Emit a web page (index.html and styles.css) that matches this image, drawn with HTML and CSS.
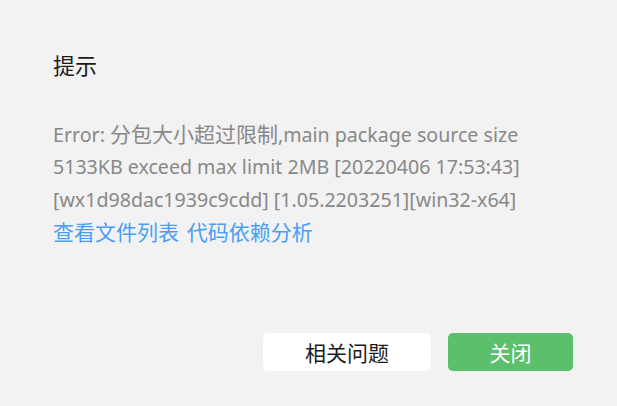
FILE: index.html
```html
<!DOCTYPE html>
<html>
<head>
<meta charset="utf-8">
<link rel="stylesheet" href="styles.css">
</head>
<body>
<div class="dialog">
  <div class="title">提示</div>
  <div class="message">
    <div class="line">Error: <span class="cjk">分包大小超过限制</span>,main package source size</div>
    <div class="line">5133KB exceed max limit 2MB [20220406 17:53:43]</div>
    <div class="line">[wx1d98dac1939c9cdd] [1.05.2203251][win32-x64]</div>
    <div class="line links"><span class="link">查看文件列表</span> <span class="link link-next">代码依赖分析</span></div>
  </div>
  <div class="actions">
    <button class="btn btn-default">相关问题</button>
    <button class="btn btn-primary">关闭</button>
  </div>
</div>
</body>
</html>
```
FILE: styles.css
```css
html, body {
  margin: 0;
  padding: 0;
  background: #f2f2f2;
}
body {
  width: 617px;
  height: 406px;
  overflow: hidden;
  font-family: "Noto Sans", "Noto Sans CJK SC", sans-serif;
}
.dialog {
  padding: 49px 44px 0 53px;
  display: flex;
  flex-direction: column;
}
.title {
  font-family: "Noto Sans CJK SC", sans-serif;
  font-size: 22px;
  line-height: 30px;
  color: #1a1a1a;
}
.message {
  margin-top: 38px;
  font-size: 19.6px;
  line-height: 33px;
  color: #888888;
}
.line {
  white-space: nowrap;
  height: 33px;
}
.cjk {
  font-family: "Noto Sans CJK SC", sans-serif;
  font-size: 21px;
}
.links {
  font-family: "Noto Sans CJK SC", sans-serif;
  font-size: 21px;
  line-height: 31px;
}
.link {
  color: #4a9ef6;
}
.link-next {
  margin-left: 3px;
}
.actions {
  margin-top: 84px;
  display: flex;
  justify-content: flex-end;
  gap: 17px;
}
.btn {
  height: 38px;
  border: none;
  border-radius: 5px;
  font-family: "Noto Sans CJK SC", sans-serif;
  font-size: 21px;
  padding: 0;
}
.btn-default {
  width: 168px;
  background: #ffffff;
  color: #1a1a1a;
}
.btn-primary {
  width: 125px;
  background: #5bbf6b;
  color: #ffffff;
}
```
